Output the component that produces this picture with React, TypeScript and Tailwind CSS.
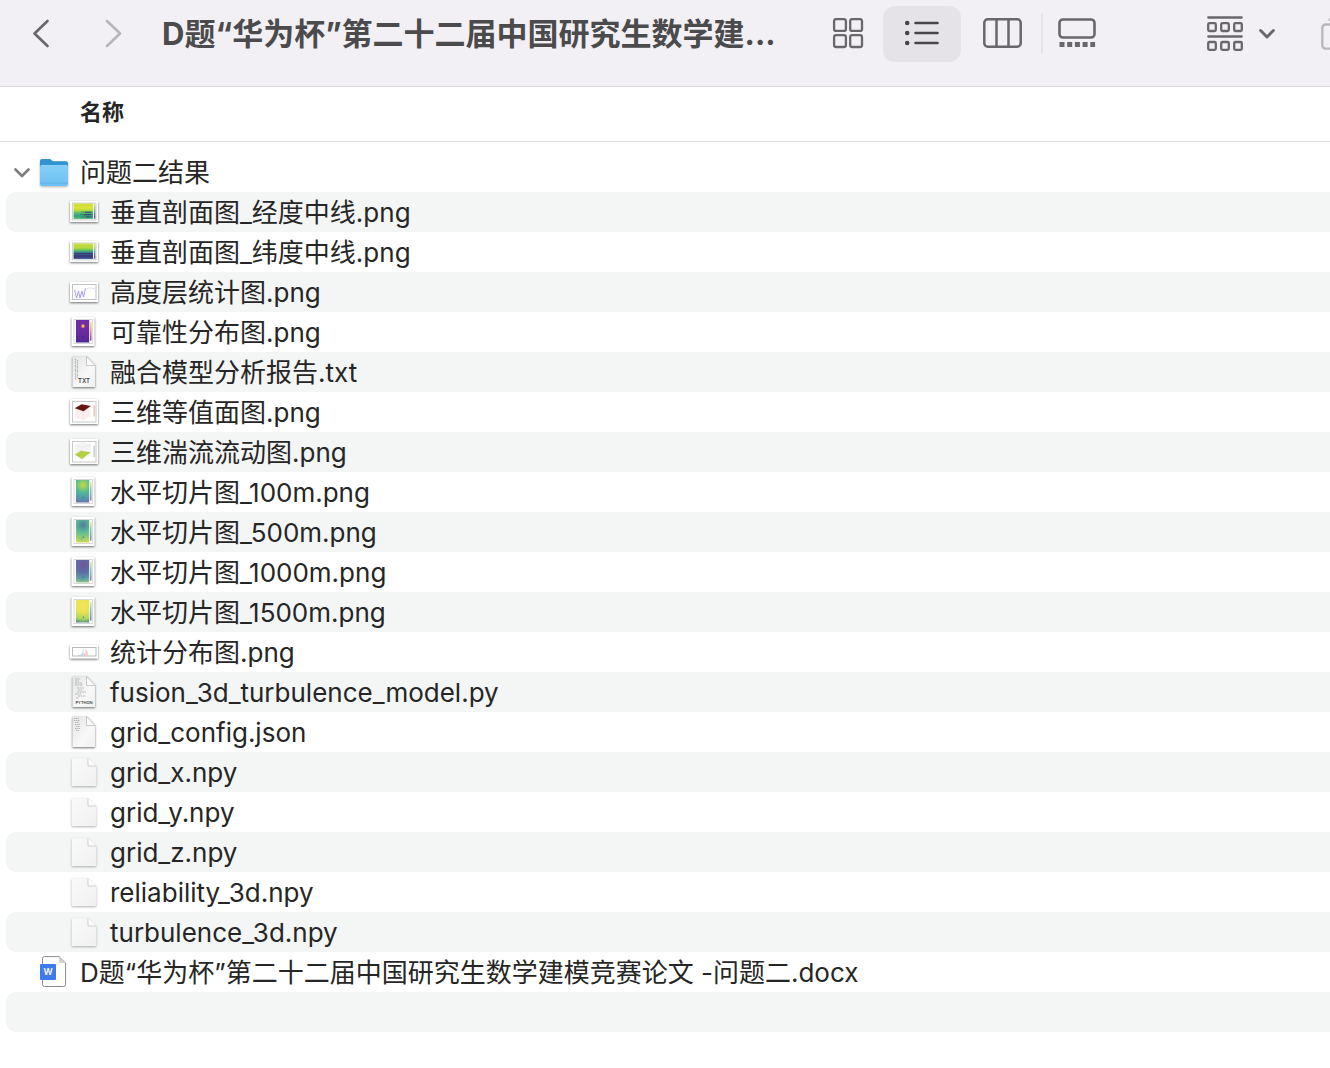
import { useState } from "react";
import type { ReactNode } from "react";

type Kind =
  | "lonSlice" | "latSlice" | "lines" | "reliability" | "txt" | "surface" | "flow"
  | "h100" | "h500" | "h1000" | "h1500" | "hist" | "py" | "json" | "blank";

const files: { name: string; kind: Kind }[] = [
  { name: "垂直剖面图_经度中线.png", kind: "lonSlice" },
  { name: "垂直剖面图_纬度中线.png", kind: "latSlice" },
  { name: "高度层统计图.png", kind: "lines" },
  { name: "可靠性分布图.png", kind: "reliability" },
  { name: "融合模型分析报告.txt", kind: "txt" },
  { name: "三维等值面图.png", kind: "surface" },
  { name: "三维湍流流动图.png", kind: "flow" },
  { name: "水平切片图_100m.png", kind: "h100" },
  { name: "水平切片图_500m.png", kind: "h500" },
  { name: "水平切片图_1000m.png", kind: "h1000" },
  { name: "水平切片图_1500m.png", kind: "h1500" },
  { name: "统计分布图.png", kind: "hist" },
  { name: "fusion_3d_turbulence_model.py", kind: "py" },
  { name: "grid_config.json", kind: "json" },
  { name: "grid_x.npy", kind: "blank" },
  { name: "grid_y.npy", kind: "blank" },
  { name: "grid_z.npy", kind: "blank" },
  { name: "reliability_3d.npy", kind: "blank" },
  { name: "turbulence_3d.npy", kind: "blank" },
];

// center, middle, edge, far edge
const heat: Record<string, [string, string, string, string]> = {
  reliability: ["#7b2fa8", "#6a2ca0", "#5b2a98", "#43218c"],
  h100: ["#c5dd3c", "#4fb998", "#5593ac", "#7766a8"],
  h500: ["#4a7f9c", "#5fbb93", "#9cd06c", "#dde24a"],
  h1000: ["#75549c", "#5a6ea4", "#5fa0a8", "#a0d67c"],
  h1500: ["#f4e65c", "#e8e254", "#a6d65c", "#3f7aa0"],
};

function FileSvg({ children }: { children: ReactNode }) {
  return (
    <svg width="30" height="40" viewBox="0 0 30 40" className="shrink-0 overflow-visible" aria-hidden="true">
      {children}
    </svg>
  );
}

function Sheet({ x, y, w, h }: { x: number; y: number; w: number; h: number }) {
  return <rect x={x} y={y} width={w} height={h} fill="#fff" className="drop-shadow-[0_1px_1px_rgba(0,0,0,0.55)]" />;
}

function SliceThumb({ kind }: { kind: Kind }) {
  const deep = kind === "latSlice";
  return (
    <FileSvg>
      <defs>
        <linearGradient id={kind} x1="0" y1="0" x2="0" y2="1">
          <stop offset="0" stopColor="#c8df3a" />
          <stop offset="0.3" stopColor={deep ? "#b4d83c" : "#dde336"} />
          <stop offset="0.45" stopColor={deep ? "#58bd68" : "#b5da3e"} />
          <stop offset="0.6" stopColor={deep ? "#2f7c8c" : "#5cbf68"} />
          <stop offset="0.8" stopColor={deep ? "#403a7c" : "#35a07c"} />
          <stop offset="1" stopColor={deep ? "#37528a" : "#4fbf6e"} />
        </linearGradient>
        <linearGradient id={kind + "Bar"} x1="0" y1="0" x2="0" y2="1">
          <stop offset="0" stopColor="#e8e66c" />
          <stop offset="0.5" stopColor="#6fb5a0" />
          <stop offset="1" stopColor="#5b3c84" />
        </linearGradient>
      </defs>
      <Sheet x={1} y={9} w={28} h={21} />
      <rect x="3.5" y="11" width="23.500" height="17" fill="#f1eff3" stroke="#c9c9cc" strokeWidth="0.800" />
      <rect x="4.600" y="11.500" width="19.400" height="15.400" fill={`url(#${kind})`} />
      {deep ? (
        <path d="M5 21.5h19M5 24h19" stroke="#3b2c70" strokeWidth="1" opacity="0.700" />
      ) : (
        <>
          <path d="M12 20h12M11 22.5h13M12 25h12" stroke="#2b6388" strokeWidth="0.9" opacity="0.600" />
          <path d="M16 20.3h6M15 22.7h7M17 25h5" stroke="#383474" strokeWidth="1.2" opacity="0.700" />
        </>
      )}
      <rect x="25" y="12" width="1.300" height="14.500" fill={`url(#${kind}Bar)`} />
    </FileSvg>
  );
}

function HeatThumb({ kind }: { kind: Kind }) {
  const [center, mid, edge, far] = heat[kind];
  const hot = kind === "reliability";
  return (
    <FileSvg>
      <defs>
        <radialGradient id={kind} gradientUnits="userSpaceOnUse" cx="14" cy="13" r="19">
          <stop offset="0" stopColor={center} />
          <stop offset="0.4" stopColor={mid} />
          <stop offset="0.75" stopColor={edge} />
          <stop offset="1" stopColor={far} />
        </radialGradient>
        <linearGradient id={kind + "Bar"} x1="0" y1="0" x2="0" y2="1">
          <stop offset="0" stopColor={hot ? "#f3ea50" : "#e6e66a"} />
          <stop offset="0.45" stopColor={hot ? "#e07a62" : "#5cb8a0"} />
          <stop offset="1" stopColor={hot ? "#4b2090" : "#6a559c"} />
        </linearGradient>
      </defs>
      <Sheet x={2.5} y={5} w={23} h={29} />
      <rect x="5" y="7.5" width="18.500" height="24" fill="#fff" stroke="#cfcfd3" strokeWidth="0.800" />
      <rect x="7" y="8" width="13.2" height="22.500" fill={`url(#${kind})`} />
      {hot && <rect x="12.5" y="12.6" width="3" height="3" fill="#f4a34a" />}
      {hot && <rect x="13.4" y="13.2" width="1.5" height="1.5" fill="#fbe55c" />}
      <circle cx="14.4" cy="25.3" r="0.8" fill={hot ? "#27136c" : "#36627c"} opacity="0.7" />
      <circle cx="12.5" cy="27" r="0.5" fill="#36627c" opacity="0.5" />
      <rect x="21.200" y="10" width="1.200" height="18.500" fill={`url(#${kind}Bar)`} />
    </FileSvg>
  );
}

function PlotThumb({ kind }: { kind: Kind }) {
  if (kind === "lines") {
    return (
      <FileSvg>
        <Sheet x={1} y={10} w={28} h={20} />
        <rect x="3.5" y="12.5" width="23.500" height="15" fill="#fff" stroke="#c2c2c5" />
        <path d="M5.500 18l2 8 2-7 1.500 7 2-7 1.500 6 2-9" fill="none" stroke="#a79cf0" strokeWidth="1" />
        <path d="M16 17l3-1h4l3 1M6 17l1 4" fill="none" stroke="#dfd0f0" strokeWidth="0.8" />
      </FileSvg>
    );
  }
  if (kind === "hist") {
    return (
      <FileSvg>
        <Sheet x={1} y={13} w={28} h={13.600} />
        <rect x="3.5" y="15.500" width="23.500" height="8.500" fill="#fff" stroke="#bcbcc0" />
        <path d="M9 23.500h3l1-2 .6 2M14 23.500v-6" fill="none" stroke="#a9cfe0" strokeWidth="0.9" />
        <path d="M17 23.500v-6M18 23.500v-4M15.500 23.500v-2" stroke="#eea4a4" strokeWidth="0.8" />
      </FileSvg>
    );
  }
  const red = kind === "surface";
  return (
    <FileSvg>
      <Sheet x={1} y={7} w={28} h={25} />
      <rect x="3.5" y="9.500" width="23.500" height="20.500" fill="#fff" stroke="#c8c8cb" />
      {red ? (
        <>
          <path d="M6 16l8 3 8-5-.5 10-7 4.500-8-3z" fill="#faefee" />
          <path d="M14 19v9.500" stroke="#f1dfdd" strokeWidth="0.6" />
          <path d="M5.800 16.300l6.700-4 9.300 1.600-7.300 5.300z" fill="#681417" />
          <rect x="24.500" y="13.500" width="1.300" height="11" fill="#eeb9ae" />
        </>
      ) : (
        <>
          <path d="M6 13l7-3 9 2v11l-9 5-7-5z" fill="#f4f4f4" />
          <path d="M6 13l7 3 9-4M13 16v8" fill="none" stroke="#e2e2e2" strokeWidth="0.5" />
          <path d="M5.800 22.500l6.200-3.700 9.700 1.400-8.700 6.800z" fill="#b3d147" />
          <rect x="24.500" y="14" width="1.300" height="11" fill="#b9c3cf" />
        </>
      )}
    </FileSvg>
  );
}

function DocThumb({ kind }: { kind: Kind }) {
  const label = kind === "txt" ? "TXT" : kind === "py" ? "PYTHON" : "";
  return (
    <FileSvg>
      <defs>
        <linearGradient id={kind} x1="0" y1="0" x2="1" y2="1">
          <stop offset="0" stopColor="#e4e4e4" />
          <stop offset="0.6" stopColor="#f8f8f8" />
          <stop offset="1" stopColor="#f0f0f0" />
        </linearGradient>
      </defs>
      <path d="M3.500 4.500H18L26 13V35H3.500z" fill={`url(#${kind})`} className="drop-shadow-[0_1px_1px_rgba(0,0,0,0.55)]" />
      <path d="M17.500 4.500V13.500H26z" fill="#fff" stroke="#b4b4b4" strokeWidth="0.700" />
      {kind === "txt" && (
        <path d="M6.500 7v21M8.500 8v18" stroke="#b4b4b4" strokeWidth="1.200" strokeDasharray="1 .8 1.800 .6" />
      )}
      {kind === "py" && (
        <path d="M6 7h5M6 9h4M6 11h7M6 13h8M8 16h7M9 18h4M8 20h9M6 22h6M9 24h8M7 26h3" stroke="#b0b0b0" strokeWidth="0.900" strokeDasharray="2 .5" />
      )}
      {kind === "json" && (
        <path d="M5 6.500h5M5 8.500h6M6 10.500h4M6 12.500h5M7 14.500h4M6 16.500h5M7 18.500h3" stroke="#b0b0b0" strokeWidth="0.900" strokeDasharray="1.500 .5" />
      )}
      {label && (
        <text x="15" y={kind === "txt" ? 31 : 31.5} textAnchor="middle" fontSize={kind === "txt" ? 6 : 4} fontWeight="600" fill="#444" fontFamily="Inter, sans-serif">
          {label}
        </text>
      )}
    </FileSvg>
  );
}

function BlankThumb() {
  return (
    <FileSvg>
      <defs>
        <linearGradient id="blank" x1="0" y1="0" x2="1" y2="1">
          <stop offset="0" stopColor="#fafafa" />
          <stop offset="1" stopColor="#f0f0f0" />
        </linearGradient>
      </defs>
      <path d="M2.800 6.200H19L27.200 14V34H2.800z" fill="url(#blank)" className="drop-shadow-[0_1px_1px_rgba(0,0,0,0.3)]" />
      <path d="M19 6.200V14h8.200z" fill="#fdfdfd" />
      <path d="M19 6.500V14h8" fill="none" stroke="#c4c4c4" strokeWidth="0.800" />
    </FileSvg>
  );
}

function FolderIcon() {
  return (
    <FileSvg>
      <defs>
        <linearGradient id="folder" x1="0" y1="0" x2="0" y2="1">
          <stop offset="0" stopColor="#84cff8" />
          <stop offset="1" stopColor="#6ec1f4" />
        </linearGradient>
      </defs>
      <g className="drop-shadow-[0_1px_1px_rgba(0,0,0,0.3)]">
        <path d="M1 9a2 2 0 0 1 2-2h7c1.200 0 1.800.4 2.600 1.200.7.700 1.300 1 2.400 1h12a2 2 0 0 1 2 2V18H1z" fill="#3193d0" />
        <path d="M1 15a2 2 0 0 1 2-2h24a2 2 0 0 1 2 2v17a2 2 0 0 1-2 2H3a2 2 0 0 1-2-2z" fill="url(#folder)" />
      </g>
      <path d="M2 13.400h26" stroke="#93d6fa" strokeWidth="0.600" />
      <path d="M1 31h28" stroke="#4ea6dc" strokeWidth="0.700" />
    </FileSvg>
  );
}

function DocxIcon() {
  return (
    <FileSvg>
      <path d="M5.500 4.600H20L26.600 11V32.500a2 2 0 0 1-2 2H5.500a2 2 0 0 1-2-2V6.600a2 2 0 0 1 2-2z" fill="#fff" stroke="#8c8c8c" strokeWidth="1" />
      <path d="M20 5v4.500A1.500 1.500 0 0 0 21.500 11H26z" fill="#d2d2d2" />
      <rect x="1" y="12" width="16" height="16" rx="1" fill="#3f7bea" />
      <text x="9" y="23" textAnchor="middle" fontSize="9" fontWeight="600" fill="#fff" fontFamily="Inter, sans-serif">W</text>
    </FileSvg>
  );
}

function Thumb({ kind }: { kind: Kind }) {
  switch (kind) {
    case "lonSlice":
    case "latSlice":
      return <SliceThumb kind={kind} />;
    case "lines":
    case "hist":
    case "surface":
    case "flow":
      return <PlotThumb kind={kind} />;
    case "txt":
    case "py":
    case "json":
      return <DocThumb kind={kind} />;
    case "blank":
      return <BlankThumb />;
    default:
      return <HeatThumb kind={kind} />;
  }
}

function Toolbar() {
  return (
    <header className="flex items-center overflow-hidden border-b border-[#d8d7da] bg-[#f2f0f5] pt-[6px] pb-6 text-[#69666c]">
      <nav className="flex shrink-0 pl-1">
        <button aria-label="后退" className="flex h-14 w-[73px] items-center justify-center">
          <svg width="20" height="32" viewBox="0 0 20 32" fill="none" stroke="currentColor" strokeWidth="2.700" strokeLinecap="round" strokeLinejoin="round">
            <path d="M16.500 3L3.500 15.500 16.500 28" />
          </svg>
        </button>
        <button aria-label="前进" disabled className="flex h-14 w-[73px] items-center justify-center text-[#b8b6bb]">
          <svg width="20" height="32" viewBox="0 0 20 32" fill="none" stroke="currentColor" strokeWidth="2.700" strokeLinecap="round" strokeLinejoin="round">
            <path d="M3 3l13 12.500L3 28" />
          </svg>
        </button>
      </nav>
      <h1 className="min-w-0 flex-1 truncate pl-3 text-[31px] leading-10 font-bold text-[#4b4a4c]">
        D题“华为杯”第二十二届中国研究生数学建...
      </h1>
      <div className="flex shrink-0 items-center">
        <button aria-label="图标" className="flex h-14 w-[70px] items-center justify-center">
          <svg width="32" height="32" viewBox="0 0 32 32" fill="none" stroke="currentColor" strokeWidth="2.300">
            <rect x="2.100" y="1.100" width="11.800" height="11.800" rx="2" />
            <rect x="18.200" y="1.100" width="11.800" height="11.800" rx="2" />
            <rect x="2.100" y="17.200" width="11.800" height="11.800" rx="2" />
            <rect x="18.200" y="17.200" width="11.800" height="11.800" rx="2" />
          </svg>
        </button>
        <button aria-label="列表" aria-pressed="true" className="flex h-14 w-[78px] items-center justify-center rounded-xl bg-[#e5e3e8] text-[#48464a]">
          <svg width="36" height="28" viewBox="0 0 36 28" fill="none" stroke="currentColor" strokeWidth="2.600" strokeLinecap="round">
            <path d="M11.500 3h22M11.500 13h22M11.500 23h22" />
            <path d="M3.200 3h.01M3.200 13h.01M3.200 23h.01" strokeWidth="4.600" />
          </svg>
        </button>
        <button aria-label="分栏" className="flex h-14 w-20 items-center justify-center">
          <svg width="42" height="32" viewBox="0 0 42 32" fill="none" stroke="currentColor" strokeWidth="2.500">
            <rect x="4.300" y="1.300" width="36.400" height="27.400" rx="3.500" />
            <path d="M16.500 1v28M28.500 1v28" />
          </svg>
        </button>
        <span className="h-10 w-[2px] bg-[#e6e4e9]" />
        <button aria-label="画廊" className="flex h-14 w-[68px] items-center justify-center">
          <svg width="38" height="32" viewBox="0 0 38 32" fill="none" stroke="currentColor" strokeWidth="2.600">
            <rect x="1.500" y="1.500" width="35" height="18" rx="3.500" />
            <path d="M1.500 26.500h35.600" strokeWidth="4.800" strokeDasharray="5 2.700" />
          </svg>
        </button>
      </div>
      <button aria-label="分组" className="ml-[94px] flex h-14 shrink-0 items-center gap-4 pl-[2px]">
        <svg width="36" height="38" viewBox="0 0 36 38" fill="none" stroke="currentColor" strokeWidth="2.300" strokeLinecap="round">
          <path d="M1.300 2.500h33.400M1.300 21.500h33.400" />
          <rect x="1.200" y="8.200" width="7.600" height="7.800" rx="1.200" />
          <rect x="14.200" y="8.200" width="7.600" height="7.800" rx="1.200" />
          <rect x="27.200" y="8.200" width="7.600" height="7.800" rx="1.200" />
          <rect x="1.200" y="27" width="7.600" height="7.800" rx="1.200" />
          <rect x="14.200" y="27" width="7.600" height="7.800" rx="1.200" />
          <rect x="27.200" y="27" width="7.600" height="7.800" rx="1.200" />
        </svg>
        <svg width="16" height="12" viewBox="0 0 16 12" fill="none" stroke="currentColor" strokeWidth="2.900" strokeLinecap="round" strokeLinejoin="round">
          <path d="M1.600 2.500L8 9l6.400-6.500" />
        </svg>
      </button>
      <button aria-label="共享" disabled className="ml-[46px] flex h-14 w-[9px] shrink-0 items-center overflow-hidden text-[#b8b6bb]">
        <svg width="28" height="36" viewBox="0 0 28 36" fill="none" stroke="currentColor" strokeWidth="2.300" strokeLinecap="round" className="shrink-0">
          <path d="M10 8.500H5A3.500 3.500 0 0 0 1.300 12v17A3.500 3.500 0 0 0 5 32.700h18a3.500 3.500 0 0 0 3.500-3.700V12A3.500 3.500 0 0 0 23 8.500h-5" />
          <path d="M8.500 3.800L14-1l5.500 4.800M14 0v20" />
        </svg>
      </button>
    </header>
  );
}

function FileName({ children }: { children: ReactNode }) {
  return <span className="pt-[2px] pl-[11px] whitespace-nowrap">{children}</span>;
}

function Row({ indent, striped, children }: { indent: string; striped: boolean; children?: ReactNode }) {
  return (
    <tr>
      <td className="p-0 pl-[6px]">
        <div className={`flex h-10 items-center rounded-l-[10px] ${indent} ${striped ? "bg-[#f4f5f5]" : ""}`}>
          {children}
        </div>
      </td>
    </tr>
  );
}

export default function App() {
  const [open, setOpen] = useState(true);
  const shown = open ? files : [];
  return (
    <div lang="zh-CN" className="min-h-screen overflow-hidden bg-white font-['Inter','Noto_Sans_CJK_SC',sans-serif] text-[#262626]">
      <Toolbar />
      <table className="w-full border-collapse text-[26px] leading-10">
        <thead>
          <tr>
            <th scope="col" className="p-0 pb-[10px] text-left">
              <div className="border-b border-[#dcdcdc] pt-[9px] pb-[13px] pl-20 text-[22px] leading-8 font-bold">名称</div>
            </th>
          </tr>
        </thead>
        <tbody>
          {/* Folder */}
          <Row indent="pl-2" striped={false}>
            <button aria-label="展开" aria-expanded={open} onClick={() => setOpen(!open)} className="mr-[9px] flex h-10 w-4 shrink-0 items-center">
              <svg width="16" height="12" viewBox="0 0 16 12" fill="none" stroke="#7d7d7d" strokeWidth="2.600" strokeLinecap="round" strokeLinejoin="round" className={open ? "" : "-rotate-90"}>
                <path d="M1.500 3.500L8 10l6.500-6.500" />
              </svg>
            </button>
            <FolderIcon />
            <FileName>问题二结果</FileName>
          </Row>
          {/* Folder contents */}
          {shown.map((file, i) => (
            <Row key={file.name} indent="pl-[63px]" striped={i % 2 === 0}>
              <Thumb kind={file.kind} />
              <FileName>{file.name}</FileName>
            </Row>
          ))}
          <Row indent="pl-[33px]" striped={shown.length % 2 === 0}>
            <DocxIcon />
            <FileName>D题“华为杯”第二十二届中国研究生数学建模竞赛论文 -问题二.docx</FileName>
          </Row>
          <Row indent="pl-0" striped={shown.length % 2 === 1} />
        </tbody>
      </table>
    </div>
  );
}
